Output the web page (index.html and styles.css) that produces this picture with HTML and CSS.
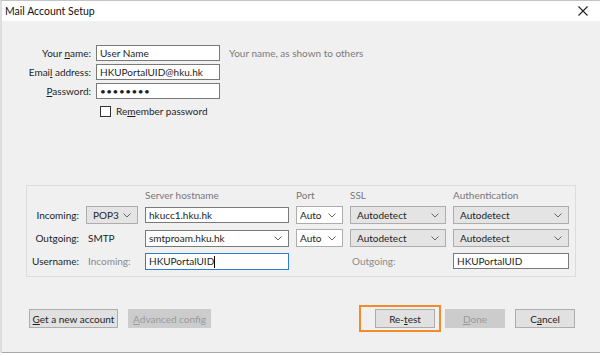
FILE: index.html
```html
<!DOCTYPE html>
<html lang="en">
<head>
  <meta charset="UTF-8" />
  <title>Mail Account Setup</title>
  <link rel="stylesheet" href="styles.css">
</head>
<body>

<div class="janela">
  <div class="titulo">
    <span>Mail Account Setup</span>
    <svg class="fechar" width="10" height="10" viewBox="0 0 10 10">
      <path d="M0.5 0.5 L9.5 9.5 M9.5 0.5 L0.5 9.5" stroke="#222" stroke-width="1.1" fill="none"/>
    </svg>
  </div>

  <div class="conteudo">

    <div class="dados">
      <label>Your <u>n</u>ame:</label>
      <div class="campo">User Name</div>
      <span class="dica">Your name, as shown to others</span>

      <label>Emai<u>l</u> address:</label>
      <div class="campo">HKUPortalUID@hku.hk</div>
      <span></span>

      <label><u>P</u>assword:</label>
      <div class="campo senha">&bull;&bull;&bull;&bull;&bull;&bull;&bull;&bull;</div>
      <span></span>

      <span></span>
      <div class="lembrar"><span class="caixa"></span><span>Re<u>m</u>ember password</span></div>
      <span></span>
    </div>

    <div class="servidores">
      <span></span>
      <span></span>
      <span class="cab">Server hostname</span>
      <span class="cab">Port</span>
      <span class="cab">SSL</span>
      <span class="cab">Authentication</span>

      <label>Incoming:</label>
      <div class="sel cinza">POP3<svg width="8" height="5" viewBox="0 0 8 5"><path d="M0.5 0.5 L4 4 L7.5 0.5" stroke="#666" fill="none"/></svg></div>
      <div class="campo">hkucc1.hku.hk</div>
      <div class="sel">Auto<svg width="8" height="5" viewBox="0 0 8 5"><path d="M0.5 0.5 L4 4 L7.5 0.5" stroke="#666" fill="none"/></svg></div>
      <div class="sel cinza">Autodetect<svg width="8" height="5" viewBox="0 0 8 5"><path d="M0.5 0.5 L4 4 L7.5 0.5" stroke="#666" fill="none"/></svg></div>
      <div class="sel cinza">Autodetect<svg width="8" height="5" viewBox="0 0 8 5"><path d="M0.5 0.5 L4 4 L7.5 0.5" stroke="#666" fill="none"/></svg></div>

      <label>Outgoing:</label>
      <span class="texto">SMTP</span>
      <div class="sel branco">smtproam.hku.hk<svg width="8" height="5" viewBox="0 0 8 5"><path d="M0.5 0.5 L4 4 L7.5 0.5" stroke="#666" fill="none"/></svg></div>
      <div class="sel">Auto<svg width="8" height="5" viewBox="0 0 8 5"><path d="M0.5 0.5 L4 4 L7.5 0.5" stroke="#666" fill="none"/></svg></div>
      <div class="sel cinza">Autodetect<svg width="8" height="5" viewBox="0 0 8 5"><path d="M0.5 0.5 L4 4 L7.5 0.5" stroke="#666" fill="none"/></svg></div>
      <div class="sel cinza">Autodetect<svg width="8" height="5" viewBox="0 0 8 5"><path d="M0.5 0.5 L4 4 L7.5 0.5" stroke="#666" fill="none"/></svg></div>

      <label>Username:</label>
      <span class="texto apagado">Incoming:</span>
      <div class="campo foco">HKUPortalUID<span class="cursor"></span></div>
      <span></span>
      <span class="texto apagado">Outgoing:</span>
      <div class="campo">HKUPortalUID</div>
    </div>

    <div class="botoes">
      <button class="btn novo"><u>G</u>et a new account</button>
      <button class="btn desligado avancado"><u>A</u>dvanced config</button>
      <span class="espaco"></span>
      <div class="destaque"><button class="btn largo">Re-<u>t</u>est</button></div>
      <button class="btn desligado largo"><u>D</u>one</button>
      <button class="btn largo">C<u>a</u>ncel</button>
    </div>

  </div>
</div>

</body>
</html>
```

FILE: styles.css
```css
body {
  margin: 0;
  background: #fff;
  font-family: "Segoe UI", Lato, "Noto Sans", sans-serif;
  font-size: 10px;
  color: #1e1e1e;
}

.janela {
  width: 600px;
  border-top: 1px solid #c4c4c4;
  border-left: 2px solid #dedede;
  box-sizing: border-box;
}

.titulo {
  height: 20px;
  display: flex;
  align-items: center;
  justify-content: space-between;
  padding: 0 12px 0 3px;
  background: #fff;
  font-size: 10.5px;
  color: #111;
}

.conteudo {
  height: 332px;
  background: #f0f0f0;
  border-bottom: 1px solid #a8a8a8;
  padding-top: 24px;
  box-sizing: border-box;
}

u {
  text-decoration-thickness: 1px;
  text-underline-offset: 1px;
}

/* dados do usuario */
.dados {
  display: grid;
  grid-template-columns: 89px 124px auto;
  grid-template-rows: 16px 16px 16px 15px;
  column-gap: 5px;
  row-gap: 3px;
  align-items: center;
}

.dados label {
  text-align: right;
}

.campo {
  height: 16px;
  line-height: 14px;
  border: 1px solid #7a7a7a;
  background: #fff;
  padding: 0 3px;
  box-sizing: border-box;
  white-space: nowrap;
  overflow: hidden;
}

.senha {
  font-size: 10px;
  letter-spacing: 0.5px;
}

.dica {
  color: #7a7a7a;
  padding-left: 4px;
}

.lembrar {
  display: flex;
  align-items: center;
  gap: 5px;
  padding-left: 4px;
  margin-top: 3px;
  white-space: nowrap;
}

.caixa {
  width: 11px;
  height: 11px;
  border: 1px solid #333;
  background: #fff;
  box-sizing: border-box;
}

/* servidores */
.servidores {
  margin: 68px 0 0 24px;
  width: 550px;
  height: 92px;
  box-sizing: border-box;
  border: 1px solid #dcdcdc;
  padding: 3px 6px 0 5px;
  display: grid;
  grid-template-columns: 47px 52px 144px 47px 96px 116px;
  grid-template-rows: 12px 18px 18px 18px;
  column-gap: 7px;
  row-gap: 5px;
  align-items: center;
}

.servidores label {
  text-align: right;
}

.cab {
  color: #777;
}

.texto {
  padding-left: 2px;
}

.apagado {
  color: #8a8a8a;
}

.sel {
  height: 18px;
  border: 1px solid #adadad;
  background: #fff;
  box-sizing: border-box;
  display: flex;
  align-items: center;
  justify-content: space-between;
  padding: 0 6px 0 3px;
  white-space: nowrap;
}

.sel.cinza {
  background: #e4e4e4;
  padding-left: 6px;
}

.sel.branco {
  border-color: #7a7a7a;
  height: 17px;
}

.foco {
  border-color: #2b7cd3;
  height: 17px;
}

.cursor {
  display: inline-block;
  width: 1px;
  height: 12px;
  background: #000;
  vertical-align: middle;
}

/* botoes */
.botoes {
  display: flex;
  align-items: center;
  margin: 28px 0 0 27px;
  width: 546px;
}

.btn {
  font-family: inherit;
  font-size: 10px;
  height: 19px;
  padding: 0;
  border: 1px solid #adadad;
  background: #e1e1e1;
  color: #1e1e1e;
  white-space: nowrap;
}

.btn.novo {
  width: 89px;
}

.btn.avancado {
  width: 83px;
}

.btn.desligado {
  background: #cccccc;
  border-color: #cccccc;
  color: #9a9a9a;
  margin-left: 10px;
}

.btn.largo {
  width: 60px;
}

.espaco {
  flex: 1;
}

.destaque {
  border: 2px solid #f58a2a;
  padding: 2px 4px;
  margin-right: 2px;
}

.destaque + .btn {
  margin-left: 2px;
}

.botoes .btn:last-child {
  margin-left: 10px;
}
```
